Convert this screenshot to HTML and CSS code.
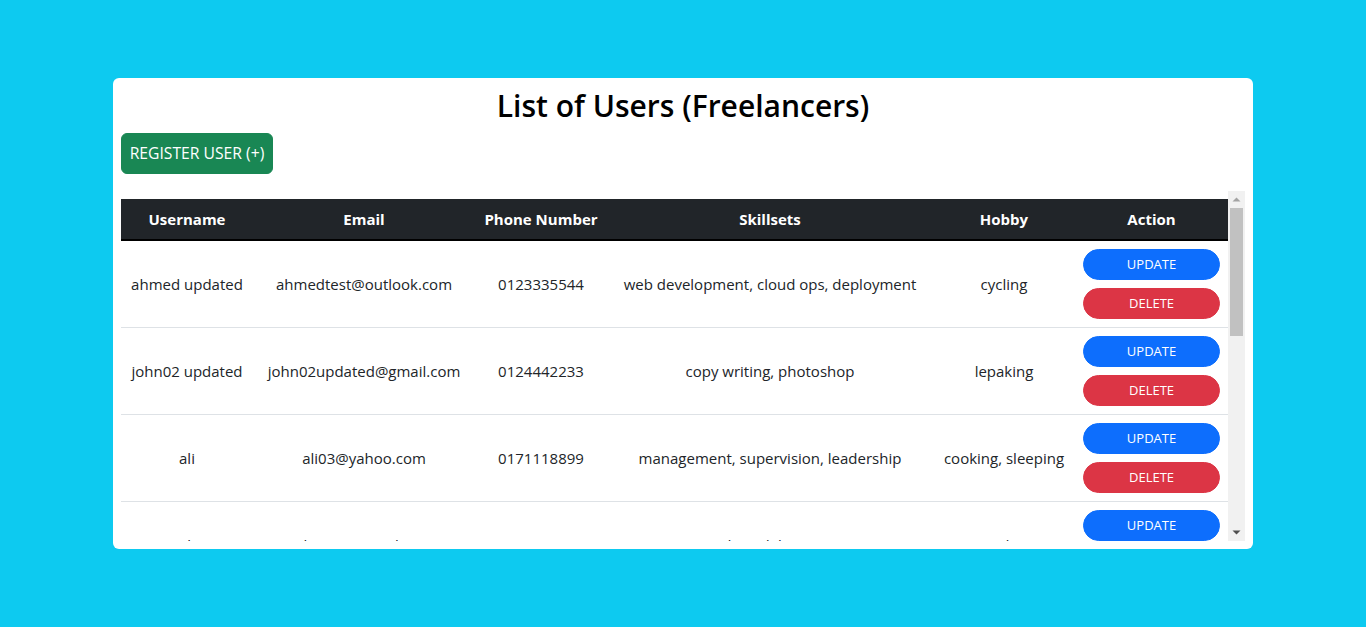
FILE: index.html
```html
<!DOCTYPE html>
<html lang="en">
<head>
<meta charset="utf-8">
<title>List of Users (Freelancers)</title>
<link rel="stylesheet" href="styles.css">
</head>
<body>
<div class="card">
  <h2 class="title">List of Users (Freelancers)</h2>
  <div class="toolbar">
    <button class="btn btn-register">REGISTER USER (+)</button>
  </div>
  <div class="table-frame">
    <div class="table-wrap">
      <table class="users">
        <colgroup>
          <col class="c-user"><col class="c-email"><col class="c-phone"><col class="c-skill"><col class="c-hobby"><col class="c-action">
        </colgroup>
        <thead>
          <tr><th>Username</th><th>Email</th><th>Phone Number</th><th>Skillsets</th><th>Hobby</th><th>Action</th></tr>
        </thead>
        <tbody>
          <tr>
            <td>ahmed updated</td><td>ahmedtest@outlook.com</td><td>0123335544</td><td>web development, cloud ops, deployment</td><td>cycling</td>
            <td><div class="actions"><button class="pill pill-update">UPDATE</button><button class="pill pill-delete">DELETE</button></div></td>
          </tr>
          <tr>
            <td>john02 updated</td><td>john02updated@gmail.com</td><td>0124442233</td><td>copy writing, photoshop</td><td>lepaking</td>
            <td><div class="actions"><button class="pill pill-update">UPDATE</button><button class="pill pill-delete">DELETE</button></div></td>
          </tr>
          <tr>
            <td>ali</td><td>ali03@yahoo.com</td><td>0171118899</td><td>management, supervision, leadership</td><td>cooking, sleeping</td>
            <td><div class="actions"><button class="pill pill-update">UPDATE</button><button class="pill pill-delete">DELETE</button></div></td>
          </tr>
          <tr>
            <td>ali</td><td>abu045@gmail.com</td><td>0119998844</td><td>coding, debugging</td><td>reading</td>
            <td><div class="actions"><button class="pill pill-update">UPDATE</button><button class="pill pill-delete">DELETE</button></div></td>
          </tr>
          <tr>
            <td>siti99</td><td>siti99@gmail.com</td><td>0135557788</td><td>graphic design, illustration</td><td>drawing</td>
            <td><div class="actions"><button class="pill pill-update">UPDATE</button><button class="pill pill-delete">DELETE</button></div></td>
          </tr>
        </tbody>
      </table>
    </div>
    <div class="scrollbar" aria-hidden="true">
      <div class="sb-btn">
        <svg width="17" height="17" viewBox="0 0 17 17"><path d="M4.5 10.5 L8.5 6.5 L12.5 10.5 Z" fill="#a3a3a3"/></svg>
      </div>
      <div class="sb-track"><div class="sb-thumb"></div></div>
      <div class="sb-btn">
        <svg width="17" height="17" viewBox="0 0 17 17"><path d="M4.5 6.5 L12.5 6.5 L8.5 10.5 Z" fill="#505050"/></svg>
      </div>
    </div>
  </div>
</div>
</body>
</html>
```
FILE: styles.css
```css
* { box-sizing: border-box; }

html, body {
  margin: 0;
  height: 100%;
}

body {
  background: #0dcaf0;
  font-family: "Open Sans", "Noto Sans", sans-serif;
  font-size: 16px;
  color: #212529;
  padding-top: 78px;
}

.card {
  width: 1140px;
  margin: 0 auto;
  background: #fff;
  border-radius: 6px;
  padding: 8px;
}

.title {
  margin: 0 0 8px;
  text-align: center;
  font-size: 30px;
  font-weight: 600;
  line-height: 39px;
  color: #000;
}

.toolbar {
  display: flex;
  margin-bottom: 17px;
}

.btn {
  font-family: inherit;
  border: 1px solid transparent;
  cursor: pointer;
}

.btn-register {
  background: #198754;
  border-color: #198754;
  color: #fff;
  font-size: 15.7px;
  line-height: 23px;
  padding: 8px 6px;
  border-radius: 6px;
  height: 41px;
  width: 152px;
}

.table-frame {
  display: flex;
  height: 350px;
}

.table-wrap {
  flex: 1;
  overflow: hidden;
  padding-top: 8px;
}

.scrollbar {
  width: 17px;
  flex: none;
  background: #f1f1f1;
  display: flex;
  flex-direction: column;
}

.sb-btn {
  height: 17px;
  flex: none;
}

.sb-btn svg { display: block; }

.sb-track {
  flex: 1;
  padding: 0 2px;
}

.sb-thumb {
  height: 128px;
  background: #c1c1c1;
}

.users {
  width: 1107px;
  border-collapse: collapse;
  table-layout: fixed;
  text-align: center;
}

.c-user { width: 132px; }
.c-email { width: 222px; }
.c-phone { width: 132px; }
.c-skill { width: 326px; }
.c-hobby { width: 142px; }
.c-action { width: 153px; }

.users th {
  background: #212529;
  color: #fff;
  font-weight: 700;
  font-size: 15px;
  line-height: 24px;
  padding: 8px;
}

.users thead tr {
  border-bottom: 2px solid #000;
}

.users td {
  padding: 8px;
  line-height: 24px;
  font-size: 15px;
  vertical-align: middle;
  border-bottom: 1px solid #dee2e6;
}

.actions {
  display: flex;
  flex-direction: column;
  gap: 8px;
}

.pill {
  font-family: inherit;
  font-size: 13px;
  line-height: 21px;
  padding: 4px 8px;
  height: 31px;
  width: 100%;
  border-radius: 50rem;
  border: 1px solid transparent;
  color: #fff;
  cursor: pointer;
}

.pill-update { background: #0d6efd; border-color: #0d6efd; }
.pill-delete { background: #dc3545; border-color: #dc3545; }
```
